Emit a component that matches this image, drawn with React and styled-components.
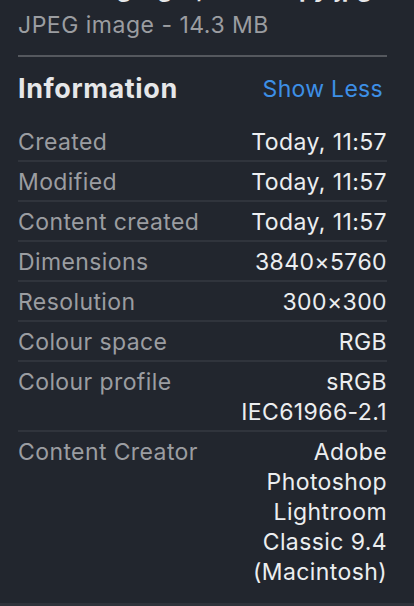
import styled, { createGlobalStyle } from 'styled-components';

const GlobalStyle = createGlobalStyle`
  html, body {
    margin: 0;
    padding: 0;
    background: #22262e;
  }
  body {
    font-family: Inter, "Noto Sans", "Liberation Sans", sans-serif;
    -webkit-font-smoothing: antialiased;
  }
`;

const Panel = styled.div`
  width: 414px;
  height: 606px;
  overflow: hidden;
  background: #22262e;
  display: flex;
  flex-direction: column;
  position: relative;
`;

const Body = styled.div`
  padding: 0 27px 0 18px;
  display: flex;
  flex-direction: column;
  flex: 1;
`;

const FileName = styled.div`
  height: 10px;
  display: flex;
  align-items: flex-end;
  justify-content: center;
  overflow: visible;
`;

const FileNameText = styled.span`
  font-size: 24px;
  line-height: 30px;
  margin-bottom: -2px;
  font-weight: 700;
  color: #e6e7e9;
  white-space: nowrap;
  transform: translateY(-8.5px);
`;

const Kind = styled.div`
  font-size: 23px;
  line-height: 30px;
  letter-spacing: 0.5px;
  color: #9b9da1;
  padding-bottom: 15px;
  border-bottom: 2px solid #55585e;
`;

const Header = styled.div`
  display: flex;
  justify-content: space-between;
  align-items: center;
  height: 63px;
`;

const Heading = styled.h2`
  margin: 0;
  font-size: 27px;
  font-weight: 700;
  letter-spacing: 0.6px;
  color: #e6e7e9;
`;

const ToggleLink = styled.button`
  background: none;
  border: 0;
  padding: 0;
  margin-right: 4px;
  font-family: inherit;
  font-size: 23px;
  letter-spacing: 0.3px;
  color: #3d8fe6;
  cursor: pointer;
`;

const Row = styled.div`
  display: flex;
  justify-content: space-between;
  align-items: flex-start;
  padding: 5px 0 3px;
  border-top: ${({ $first }) => ($first ? '2px solid transparent' : '2px solid #30343c')};
  font-size: 23px;
  line-height: 30px;
  letter-spacing: 0.4px;
`;

const Label = styled.div`
  color: #9b9da1;
  white-space: nowrap;
`;

const Value = styled.div`
  color: #eceef0;
  text-align: right;
`;

const BottomEdge = styled.div`
  position: absolute;
  left: 0;
  right: 0;
  bottom: 0;
  height: 3px;
  background: #2e323a;
`;

const rows = [
  ['Created', ['Today, 11:57']],
  ['Modified', ['Today, 11:57']],
  ['Content created', ['Today, 11:57']],
  ['Dimensions', ['3840×5760']],
  ['Resolution', ['300×300']],
  ['Colour space', ['RGB']],
  ['Colour profile', ['sRGB', 'IEC61966-2.1']],
  ['Content Creator', ['Adobe', 'Photoshop', 'Lightroom', 'Classic 9.4', '(Macintosh)']],
];

export default function App() {
  return (
    <Panel>
      <GlobalStyle />
      <Body>
        <FileName>
          <FileNameText>Morning Light, Lake copy.jpg</FileNameText>
        </FileName>
        <Kind>JPEG image - 14.3 MB</Kind>
        <Header>
          <Heading>Information</Heading>
          <ToggleLink>Show Less</ToggleLink>
        </Header>
        {rows.map(([label, lines], i) => (
          <Row key={label} $first={i === 0}>
            <Label>{label}</Label>
            <Value>
              {lines.map((l) => (
                <div key={l}>{l}</div>
              ))}
            </Value>
          </Row>
        ))}
      </Body>
      <BottomEdge />
    </Panel>
  );
}
